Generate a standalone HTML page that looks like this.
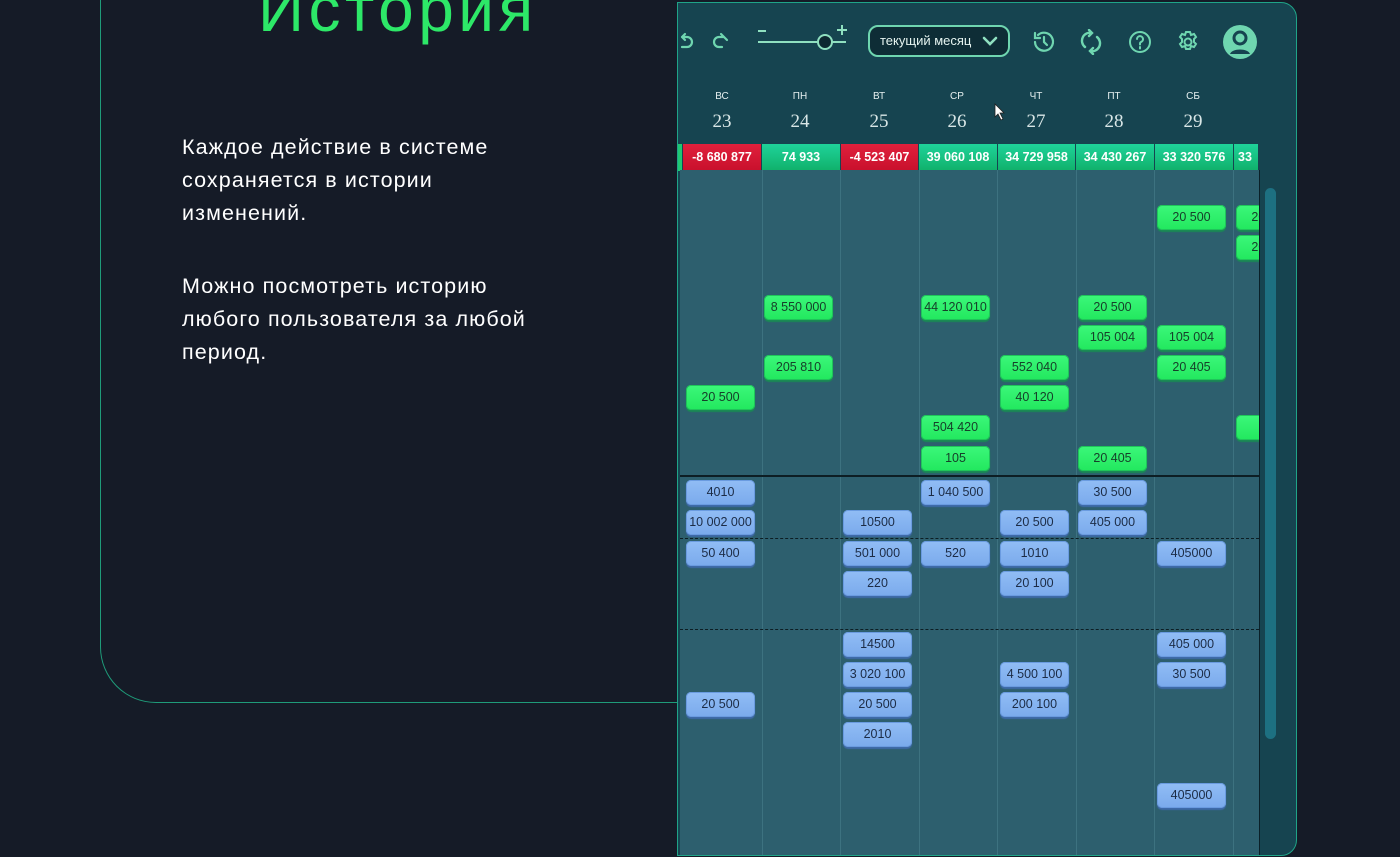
<!DOCTYPE html>
<html><head><meta charset="utf-8"><style>
*{margin:0;padding:0;box-sizing:border-box}
body{width:1400px;height:857px;background:#151b27;position:relative;overflow:hidden;font-family:"Liberation Sans",sans-serif}
.card{position:absolute;left:100px;top:-60px;width:620px;height:763px;border:1.5px solid #1f9b79;border-radius:0 0 0 56px;border-top:none;border-right:none}
h1{position:absolute;left:258px;top:-23px;font-size:64px;line-height:64px;font-weight:400;color:#2de868;letter-spacing:4.5px}
.p{position:absolute;left:182px;color:#fff;font-size:21.5px;line-height:33px;letter-spacing:1.1px}
.panel{position:absolute;left:677px;top:2px;width:620px;height:854px;background:#164450;border:1.5px solid #1fa488;border-radius:0 16px 16px 0;overflow:hidden}
.grid{position:absolute;left:2px;top:167px;width:579px;height:690px;background:#2d5f6e;overflow:hidden}
.vl{position:absolute;top:0;bottom:0;width:1px;background:#3d7280}
.c{position:absolute;width:69px;height:25px;border-radius:5px;font-size:12.5px;text-align:center;line-height:24px;font-family:"Liberation Sans",sans-serif}
.g{background:linear-gradient(#3cf77a,#22e85e);color:#16402a;box-shadow:0 2px 1px #1a8a55,inset 0 0 0 1px #1fc45a}
.b{background:linear-gradient(#91bdf5,#7aaaec);color:#1c2c46;box-shadow:0 2px 1px #3e6aa8,inset 0 0 0 1px #6a9be0}
.tot{position:absolute;top:141px;height:27px;color:#fff;font-size:12.5px;font-weight:700;text-align:center;line-height:27px;border-right:1px solid #164450}
.day{position:absolute;text-align:center;width:60px;color:#e6f0f0}
.dn{top:88px;font-size:10px}
.dd{top:108px;font-size:19px;font-family:"Liberation Serif",serif;color:#d8e6e6}
.ic{position:absolute;top:24px}
</style></head><body>
<div class="card"></div>
<h1>История</h1>
<div class="p" style="top:131px">Каждое действие в системе<br>сохраняется в истории<br>изменений.</div>
<div class="p" style="top:270px">Можно посмотреть историю<br>любого пользователя за любой<br>период.</div>

<div class="panel">
<svg class="ic" style="left:0;top:28px" width="60" height="24" viewBox="0 0 60 24" fill="none" stroke="#6fd6b0" stroke-width="2.2" stroke-linecap="round"><path d="M4 6h5a5 5 0 0 1 0 10H4M4 6l3-3M4 6l3 3"/><path d="M50 6h-5a5 5 0 0 0 0 10h3M50 6l-3-3M50 6l3 3" transform="translate(-4 0)"/></svg>
<svg class="ic" style="left:78px;top:20px" width="96" height="30" viewBox="0 0 96 30" fill="none" stroke="#8fe0c0" stroke-width="2"><path d="M2 8h8M86 2v10M81 7h10M2 19h60M76 19h14"/><circle cx="69" cy="19" r="7" fill="#0d2830"/></svg>
<div style="position:absolute;left:190px;top:22px;width:142px;height:32px;border:2px solid #6fd6b0;border-radius:10px;background:#0e2d36;color:#e6f4f0;font-size:13px;line-height:28px;padding-left:10px">текущий месяц<svg style="position:absolute;right:10px;top:8px" width="16" height="12" viewBox="0 0 16 12" fill="none" stroke="#8fe0c0" stroke-width="2.6" stroke-linecap="round"><path d="M2 3l6 6 6-6"/></svg></div>
<svg class="ic" style="left:353px;top:26px" width="26" height="26" viewBox="0 0 26 26" fill="none" stroke="#6fd6b0" stroke-width="2.2" stroke-linecap="round"><path d="M4 13a9 9 0 1 0 3-7M4 4v5h5M13 8v5l3 3"/></svg>
<svg class="ic" style="left:400px;top:26px" width="26" height="26" viewBox="0 0 26 26" fill="none" stroke="#6fd6b0" stroke-width="2.4" stroke-linecap="round"><path d="M7 18a8 8 0 0 1 7-14M11 1l3 3-3 3M19 8a8 8 0 0 1-7 14M15 25l-3-3 3-3"/></svg>
<svg class="ic" style="left:449px;top:26px" width="26" height="26" viewBox="0 0 26 26" fill="none" stroke="#6fd6b0" stroke-width="2"><circle cx="13" cy="13" r="10"/><path d="M10 10a3 3 0 1 1 4 3c-1 .5-1 1-1 2.5M13 18v1.5" stroke-linecap="round"/></svg>
<svg class="ic" style="left:497px;top:26px" width="26" height="26" viewBox="0 0 26 26" fill="none" stroke="#6fd6b0" stroke-width="2"><circle cx="13" cy="13" r="3.5"/><path d="M11 3h4l1 3 3-1 2 3-2 2 0 3 2 2-2 3-3-1-1 3h-4l-1-3-3 1-2-3 2-2v-3l-2-2 2-3 3 1z"/></svg>
<svg class="ic" style="left:544px;top:21px" width="36" height="36" viewBox="0 0 36 36"><circle cx="18" cy="18" r="17" fill="#6fd6b0"/><circle cx="18" cy="14" r="6" fill="none" stroke="#164450" stroke-width="3"/><path d="M8 30c2-6 18-6 20 0" fill="#164450"/></svg>

<div class="day dn" style="left:14px">ВС</div><div class="day dd" style="left:14px">23</div>
<div class="day dn" style="left:92px">ПН</div><div class="day dd" style="left:92px">24</div>
<div class="day dn" style="left:171px">ВТ</div><div class="day dd" style="left:171px">25</div>
<div class="day dn" style="left:249px">СР</div><div class="day dd" style="left:249px">26</div>
<div class="day dn" style="left:328px">ЧТ</div><div class="day dd" style="left:328px">27</div>
<div class="day dn" style="left:406px">ПТ</div><div class="day dd" style="left:406px">28</div>
<div class="day dn" style="left:485px">СБ</div><div class="day dd" style="left:485px">29</div>
<svg style="position:absolute;left:316px;top:100px" width="12" height="18" viewBox="0 0 12 18"><path d="M1 1v13l3-3 3 6 2-1-3-6h4z" fill="#fff" stroke="#222" stroke-width=".8"/></svg>

<div class="tot" style="left:0;width:5px;background:#1fc872"></div>
<div class="tot" style="left:5px;width:79px;background:linear-gradient(#e0203c,#c8102c)">-8 680 877</div>
<div class="tot" style="left:84px;width:79px;background:linear-gradient(#1fd39a,#10b06a)">74 933</div>
<div class="tot" style="left:163px;width:78px;background:linear-gradient(#e0203c,#c8102c)">-4 523 407</div>
<div class="tot" style="left:241px;width:79px;background:linear-gradient(#1fd39a,#10b06a)">39 060 108</div>
<div class="tot" style="left:320px;width:78px;background:linear-gradient(#1fd39a,#10b06a)">34 729 958</div>
<div class="tot" style="left:398px;width:79px;background:linear-gradient(#1fd39a,#10b06a)">34 430 267</div>
<div class="tot" style="left:477px;width:79px;background:linear-gradient(#1fd39a,#10b06a)">33 320 576</div>
<div class="tot" style="left:556px;width:25px;background:linear-gradient(#1fd39a,#10b06a);text-align:left;padding-left:4px">33 </div>

<div class="grid">
<div class="vl" style="left:82px"></div><div class="vl" style="left:160px"></div><div class="vl" style="left:239px"></div><div class="vl" style="left:317px"></div><div class="vl" style="left:396px"></div><div class="vl" style="left:474px"></div><div class="vl" style="left:553px"></div>
<div style="position:absolute;left:0;right:0;top:305px;height:2px;background:#0d1e24"></div>
<div style="position:absolute;left:0;right:0;top:368px;border-top:1px dashed #0d1e24"></div>
<div style="position:absolute;left:0;right:0;top:459px;border-top:1px dashed #0d1e24"></div>

<div class="c g" style="left:477px;top:35px">20 500</div>
<div class="c g" style="left:556px;top:35px">20 500</div>
<div class="c g" style="left:556px;top:65px">20 500</div>
<div class="c g" style="left:84px;top:125px">8 550 000</div>
<div class="c g" style="left:241px;top:125px">44 120 010</div>
<div class="c g" style="left:398px;top:125px">20 500</div>
<div class="c g" style="left:398px;top:155px">105 004</div>
<div class="c g" style="left:477px;top:155px">105 004</div>
<div class="c g" style="left:84px;top:185px">205 810</div>
<div class="c g" style="left:320px;top:185px">552 040</div>
<div class="c g" style="left:477px;top:185px">20 405</div>
<div class="c g" style="left:6px;top:215px">20 500</div>
<div class="c g" style="left:320px;top:215px">40 120</div>
<div class="c g" style="left:241px;top:245px">504 420</div>
<div class="c g" style="left:556px;top:245px">105</div>
<div class="c g" style="left:241px;top:276px">105</div>
<div class="c g" style="left:398px;top:276px">20 405</div>

<div class="c b" style="left:6px;top:310px">4010</div>
<div class="c b" style="left:241px;top:310px">1 040 500</div>
<div class="c b" style="left:398px;top:310px">30 500</div>
<div class="c b" style="left:6px;top:340px">10 002 000</div>
<div class="c b" style="left:163px;top:340px">10500</div>
<div class="c b" style="left:320px;top:340px">20 500</div>
<div class="c b" style="left:398px;top:340px">405 000</div>
<div class="c b" style="left:6px;top:371px">50 400</div>
<div class="c b" style="left:163px;top:371px">501 000</div>
<div class="c b" style="left:241px;top:371px">520</div>
<div class="c b" style="left:320px;top:371px">1010</div>
<div class="c b" style="left:477px;top:371px">405000</div>
<div class="c b" style="left:163px;top:401px">220</div>
<div class="c b" style="left:320px;top:401px">20 100</div>
<div class="c b" style="left:163px;top:462px">14500</div>
<div class="c b" style="left:477px;top:462px">405 000</div>
<div class="c b" style="left:163px;top:492px">3 020 100</div>
<div class="c b" style="left:320px;top:492px">4 500 100</div>
<div class="c b" style="left:477px;top:492px">30 500</div>
<div class="c b" style="left:6px;top:522px">20 500</div>
<div class="c b" style="left:163px;top:522px">20 500</div>
<div class="c b" style="left:320px;top:522px">200 100</div>
<div class="c b" style="left:163px;top:552px">2010</div>
<div class="c b" style="left:477px;top:613px">405000</div>
</div>
<div style="position:absolute;left:581px;top:167px;width:1px;height:690px;background:#0a2028"></div>
<div style="position:absolute;left:587px;top:185px;width:11px;height:551px;border-radius:6px;background:#1d7081"></div>
</div>
</body></html>
